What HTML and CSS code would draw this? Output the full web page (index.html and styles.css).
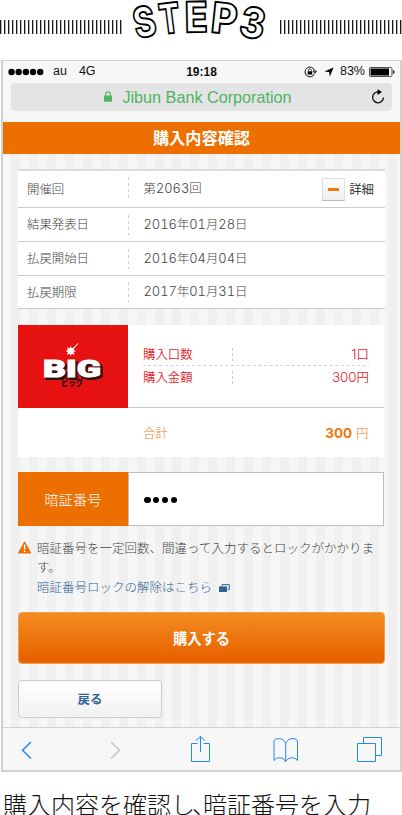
FILE: index.html
```html
<!DOCTYPE html>
<html lang="ja">
<head>
<meta charset="utf-8">
<title>購入内容確認</title>
<link rel="stylesheet" href="styles.css">
</head>
<body>
<header class="step">
  <svg class="ticks" width="122" height="14"><defs><pattern id="tick" width="4" height="14" patternUnits="userSpaceOnUse"><rect x="0.1" width="1.2" height="14" fill="#000"/></pattern></defs><rect width="122" height="14" fill="url(#tick)"/></svg>
  <svg class="word" width="158" height="46" viewBox="122 0 158 46">
    <g class="outline">
      <text transform="translate(137 39) rotate(-13)" textLength="22" lengthAdjust="spacingAndGlyphs">S</text>
      <text transform="translate(161 34.5) rotate(-7)" textLength="21" lengthAdjust="spacingAndGlyphs">T</text>
      <text transform="translate(185 32.2) rotate(-1)" textLength="23" lengthAdjust="spacingAndGlyphs">E</text>
      <text transform="translate(210 32) rotate(6)" textLength="26" lengthAdjust="spacingAndGlyphs">P</text>
      <text transform="translate(237.5 35) rotate(12)" textLength="25" lengthAdjust="spacingAndGlyphs">3</text>
    </g>
  </svg>
  <svg class="ticks" width="122" height="14"><rect width="122" height="14" fill="url(#tick)"/></svg>
</header>

<main class="phone">
  <div class="status">
    <div class="carrier">
      <svg width="36" height="8" viewBox="0 0 36 8"><circle cx="3.6" cy="4" r="3.2"/><circle cx="10.7" cy="4" r="3.2"/><circle cx="17.9" cy="4" r="3.2"/><circle cx="25" cy="4" r="3.2"/><circle cx="32.2" cy="4" r="3.2"/></svg>
      <span class="au">au</span><span>4G</span>
    </div>
    <time>19:18</time>
    <div class="indicators">
      <svg width="13" height="12" viewBox="0 0 13 12"><path d="M10.5 7.7A4.9 4.9 0 1 1 10.6 4.5M9 5.1h3.4L10.8 7.2z" fill="none" stroke="#111"/><rect x="3.6" y="5.3" width="4.6" height="3.3"/><path d="M4.5 5.4V4.3a1.4 1.4 0 0 1 2.8 0v1.1" fill="none" stroke="#111" stroke-width=".8"/></svg>
      <svg class="arrow" width="10" height="10" viewBox="0 0 10 10"><path d="M9.5.5 5.8 9.7 5.2 4.9.4 4.6z"/></svg>
      <span>83%</span>
      <svg class="battery" width="26" height="10" viewBox="0 0 26 10"><rect x=".5" y=".5" width="22.5" height="9" rx="1.4" fill="none" stroke="#222" stroke-width=".8"/><rect x="1.6" y="1.5" width="18.4" height="7"/><path d="M24.2 3v4q1.4-.5 1.4-2t-1.4-2z"/></svg>
    </div>
  </div>
  <div class="address">
    <span></span>
    <div class="site"><svg width="8" height="11" viewBox="0 0 8 11"><rect y="4.6" width="8" height="6.2" rx=".7"/><path d="M1.7 5V3.2a2.3 2.3 0 0 1 4.6 0V5" fill="none" stroke="#4eb460" stroke-width="1.1"/></svg><span>Jibun Bank Corporation</span></div>
    <svg class="reload" width="14" height="16" viewBox="0 0 14 16"><path d="M7.4 3A5.4 5.4 0 1 0 12.4 8.4" fill="none" stroke="#111" stroke-width="1.3"/><path d="M6.6.2 11 3.1 6.6 6z"/></svg>
  </div>
  <h1>購入内容確認</h1>

  <section class="page">
    <dl class="info">
      <div class="row first"><dt>開催回</dt><dd>第<b>2063</b>回</dd>
        <button class="detail"><span class="minus"><i></i></span>詳細</button></div>
      <div class="row"><dt>結果発表日</dt><dd><b>2016</b>年<b>01</b>月<b>28</b>日</dd></div>
      <div class="row"><dt>払戻開始日</dt><dd><b>2016</b>年<b>04</b>月<b>04</b>日</dd></div>
      <div class="row"><dt>払戻期限</dt><dd><b>2017</b>年<b>01</b>月<b>31</b>日</dd></div>
    </dl>

    <div class="order">
      <div class="logo">
        <svg width="110" height="83" viewBox="18 325 110 83">
          <g stroke="#fff" stroke-width="1.1"><path d="M71.5 350.5 78 343.5"/><path d="M66 351h9.600M70.700 346.500v9M67.300 347.700l7 6.800M74.300 347.700l-7 6.800"/></g>
          <circle cx="70.7" cy="351" r="3.200" fill="#fff"/>
          <g class="big"><text class="shade" x="44.500" y="378.500" textLength="58" lengthAdjust="spacingAndGlyphs">BIG</text><text x="43" y="377" textLength="58" lengthAdjust="spacingAndGlyphs">BIG</text></g>
          <text class="kana" x="61" y="386.300" textLength="22" lengthAdjust="spacingAndGlyphs">ビッグ</text>
        </svg>
      </div>
      <div class="lines">
        <div class="line"><span>購入口数</span><span class="val"><b>1</b>口</span></div>
        <div class="line"><span>購入金額</span><span class="val"><b>300</b>円</span></div>
      </div>
      <div class="total"><span>合計</span><span><strong>300</strong>円</span></div>
    </div>

    <div class="pin"><label>暗証番号</label><div class="field"><i></i><i></i><i></i><i></i></div></div>

    <div class="notice">
      <svg width="14" height="13" viewBox="0 0 14 13"><path d="M6.600.8 12.700 12H.5z" fill="#ec6f00" stroke="#ec6f00" stroke-linejoin="round"/><path d="M6.600 3.500v4.800M6.600 9.400v1.600" stroke="#fff" stroke-width="1.500"/></svg>
      <p>暗証番号を一定回数、間違って入力するとロックがかかります。<br><a>暗証番号ロックの解除はこちら<svg width="11" height="9" viewBox="0 0 11 9"><path d="M3 2V.6h7.300v5H8.800" fill="none" stroke="#316097"/><rect y="2.400" width="8" height="5.600" fill="#316097"/></svg></a></p>
    </div>

    <button class="buy">購入する</button>
    <button class="back">戻る</button>
  </section>

  <nav class="toolbar">
    <svg width="397" height="43" viewBox="3 727 397 43">
      <path d="M31 741 22.500 749.300 31 757.500" stroke-width="1.500"/>
      <path class="off" d="M111 741 119.500 749.300 111 757.500" stroke-width="1.500"/>
      <path d="M197.500 742.500h-6v18h18v-18h-6M200.500 751v-15.500M196 739.800 200.500 735.300 205 739.800"/>
      <path d="M285.700 760.500V742.200Q283.500 737.500 279.500 737.500 275.500 737.500 274 739.500V759.500Q276 756.500 280 756.700 284 757 285.700 760.500 287.500 757 291.500 756.700 295.500 756.500 297.500 759.500V739.500Q296 737.500 292 737.500 288 737.500 285.700 742.200"/>
      <path d="M357.500 742.500h18v18h-18zM363.500 742.500v-6h18v18h-6"/>
    </svg>
  </nav>
</main>
<p class="caption">購入内容を確認<span class="shi">し</span><span class="comma">、</span>暗証番号を入力</p>
</body>
</html>
```

FILE: styles.css
```css
* { box-sizing: border-box; }
body {
  margin: 0;
  width: 402px;
  height: 815px;
  overflow: hidden;
  background: #fff;
  color: #444;
  font: 300 12.4px/1 "Noto Sans CJK JP", sans-serif;
}
svg { display: block; flex: none; }
button { font: inherit; padding: 0; border: 0; }
p, h1, dl, dd { margin: 0; }

.step { display: flex; height: 60px; }
.ticks { margin-top: 20px; }
.outline { font: 800 42px Inter, sans-serif; fill: #fff; stroke: #000; stroke-width: 1.9; }

.phone {
  margin-left: 1px;
  width: 401px;
  height: 712px;
  border: 2px solid #cdd3d3;
  border-top-width: 1px;
  background: #f7f7f7;
}
.status {
  display: grid;
  grid-template-columns: 1fr auto 1fr;
  align-items: center;
  height: 21px;
  padding: 0 5px;
  color: #111;
  font: 12.5px/1 "Liberation Sans", sans-serif;
}
.status time { font-weight: 700; font-size: 12px; }
.carrier { display: flex; align-items: center; }
.au { margin: 0 12px 0 9px; }
.indicators { display: flex; align-items: center; justify-content: flex-end; }
.arrow { margin: 0 6px 0 7px; }
.battery { margin-left: 4px; }
.address {
  display: grid;
  grid-template-columns: 1fr auto 1fr;
  align-items: center;
  height: 28px;
  margin: 1px 8px 11px;
  padding-right: 7px;
  border-radius: 4px;
  background: #e4e4e6;
  color: #4eb460;
  font: 16.2px/1 "Liberation Sans", sans-serif;
}
.site { display: flex; align-items: center; gap: 10px; margin-left: 0; }
.site svg { fill: #4eb460; }
.reload { justify-self: end; }
h1 {
  height: 32px;
  background: #ec6f00;
  color: #fff;
  font-size: 16.2px;
  font-weight: 700;
  line-height: 31px;
  text-align: center;
}
.page {
  height: 573px;
  padding: 15px 15px 0;
  background: repeating-linear-gradient(90deg, #f6f6f6 0 8px, #f0f0f0 8px 17px, #f6f6f6 17px 17.940px);
}
.info { border-top: 2px solid #dcdcdc; width: 367px; background: #fff; }
.row { display: flex; align-items: center; height: 34px; border-bottom: 1px solid #ccc; }
.row.first { height: 37px; }
.row:last-child { height: 33px; }
.row dt {
  display: flex;
  align-items: center;
  width: 111px;
  height: 20px;
  padding-left: 9px;
  background: repeating-linear-gradient(#ccc 0 3px, transparent 3px 6px) right / 1px 100% no-repeat;
}
.row.first dt { height: 24px; }
.row dd { padding-left: 14.500px; }
.row b { font: 300 12.9px/1 Inter, sans-serif; font-feature-settings: "tnum"; }
.detail { display: flex; align-items: center; margin-left: auto; padding-right: 11px; background: none; color: #333; font-weight: 400; }
.minus {
  display: grid;
  place-items: center;
  width: 23px;
  height: 23px;
  margin-right: 4.500px;
  border: 1px solid #ddd;
  border-bottom-color: #bbb;
  border-radius: 1px;
  background: linear-gradient(#fff, #eee);
}
.minus i { width: 11px; height: 3px; background: #ec7a10; }

.order {
  display: grid;
  grid-template: 83px 49px / 110px 1fr;
  width: 366px;
  margin-top: 16px;
  background: #fff;
}
.logo { background: #e61212; }
.big { font: 900 24px "Roboto", sans-serif; fill: #fff; stroke: #fff; stroke-width: 1; }
.big .shade { fill: #301010; stroke: #301010; stroke-width: 2; }
.kana { font: 900 9px "Noto Sans CJK JP", sans-serif; fill: #301010; }
.lines { padding: 18px 15px 0; border-bottom: 1px solid #c8c8c8; color: #e3262e; }
.line {
  display: flex;
  justify-content: space-between;
  align-items: center;
  height: 23px;
  font-weight: 350;
  background: repeating-linear-gradient(#ccc 0 3px, transparent 3px 5px) 89px 5px / 1px 13px no-repeat;
}
.line:first-child { background-image: repeating-linear-gradient(#ccc 0 3px, transparent 3px 5px), repeating-linear-gradient(90deg, #d4d4d4 0 3px, transparent 3px 5.500px); background-position: 89px 5px, 0 22px; background-size: 1px 13px, 100% 1px; }
.line b { font: 300 13.400px/1 Inter, sans-serif; }
.total {
  grid-column: 2;
  display: flex;
  justify-content: space-between;
  align-items: center;
  padding: 2px 15.500px 0 15px;
  color: #ec7a10;
}
.total strong { margin-right: 4px; font: 700 13.500px/1 Inter, sans-serif; }

.pin { display: flex; width: 366px; height: 54px; margin-top: 15px; }
.pin label { width: 110px; background: #ec6f00; color: #fff; font-size: 14.200px; line-height: 54px; text-align: center; }
.field { flex: 1; display: flex; align-items: center; gap: 2.400px; padding: 2px 0 0 15px; border: 1px solid #bdbdbd; background: #fff; }
.field i { width: 6.500px; height: 6.500px; border-radius: 50%; background: #000; }

.notice { display: flex; margin-top: 12px; }
.notice > svg { margin: 3px 5px 0 0; }
.notice p { width: 340px; font-size: 12.500px; line-height: 19.400px; }
.notice a { color: #316097; }
.notice a svg { display: inline-block; margin-left: 7px; vertical-align: -1px; }
.buy {
  display: block;
  width: 367px;
  height: 52px;
  margin-top: 16px;
  border: 1px solid #f0a052;
  border-radius: 4px;
  background: linear-gradient(#f38b20, #e86300 90%);
  color: #fff;
  font-size: 14.300px;
  font-weight: 700;
}
.back {
  display: block;
  width: 144px;
  height: 38px;
  margin-top: 16px;
  border: 1px solid #ccc;
  border-radius: 4px;
  background: linear-gradient(#fff, #f1f1f1);
  color: #316097;
  font-weight: 700;
}
.toolbar { border-top: 1px solid #d0d0d0; height: 44px; }
.toolbar path { fill: none; stroke: #2388f5; }
.toolbar .off { stroke: #c6c6c8; }
.caption { margin: 20px 0 0 3px; color: #111; font-size: 24px; line-height: 24px; white-space: nowrap; }
.shi { letter-spacing: -3px; }
.comma { letter-spacing: -13px; }
```
